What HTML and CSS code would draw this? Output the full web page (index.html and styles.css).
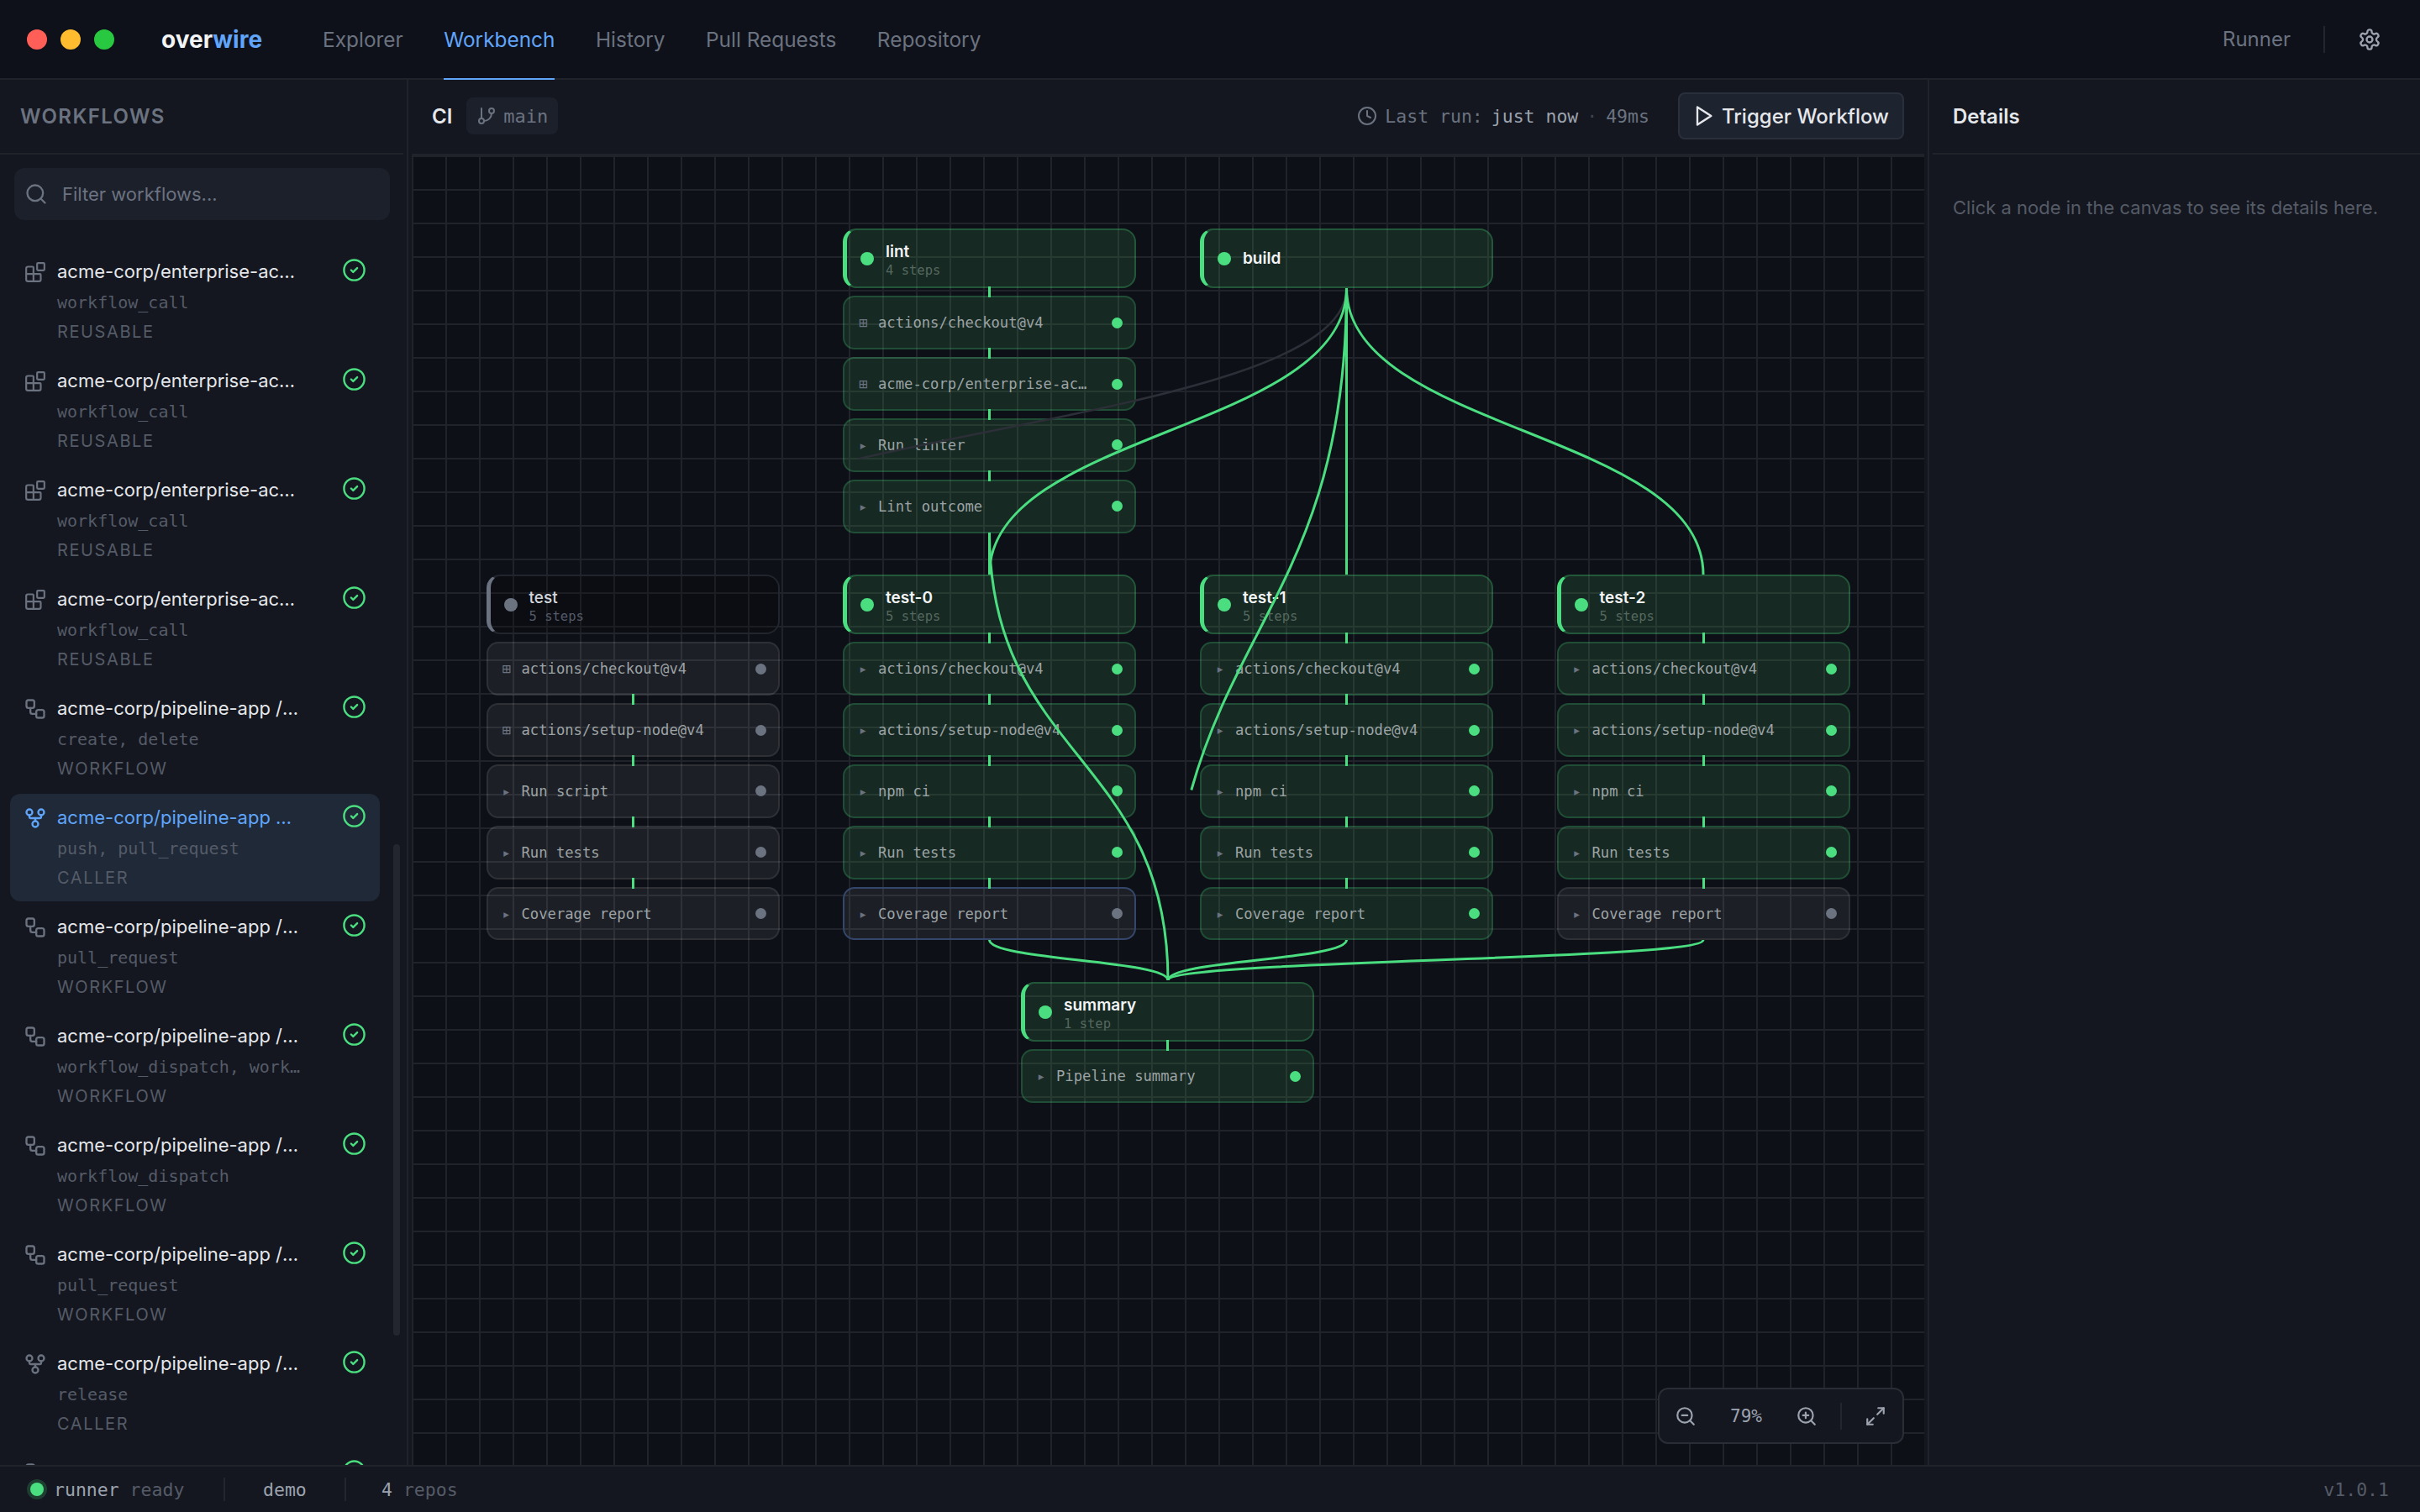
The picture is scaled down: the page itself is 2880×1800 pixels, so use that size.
FILE: index.html
```html
<!DOCTYPE html>
<html lang="en">
  <head>
    <meta charset="UTF-8" />
    <title>overwire</title>
    <link rel="stylesheet" href="styles.css">
  </head>

  <body>
    <svg class="defs" width="0" height="0">
      <symbol id="i-blocks" viewBox="0 0 24 24"><path d="M10 22V7a1 1 0 0 0-1-1H4a2 2 0 0 0-2 2v12a2 2 0 0 0 2 2h12a2 2 0 0 0 2-2v-5a1 1 0 0 0-1-1H2"/><rect x="14" y="2" width="8" height="8" rx="1"/></symbol>
      <symbol id="i-workflow" viewBox="0 0 24 24"><rect width="8" height="8" x="3" y="3" rx="2"/><path d="M7 11v4a2 2 0 0 0 2 2h4"/><rect width="8" height="8" x="13" y="13" rx="2"/></symbol>
      <symbol id="i-fork" viewBox="0 0 24 24"><circle cx="12" cy="18" r="3"/><circle cx="6" cy="6" r="3"/><circle cx="18" cy="6" r="3"/><path d="M18 9v2c0 .6-.4 1-1 1H7c-.6 0-1-.4-1-1V9"/><path d="M12 12v3"/></symbol>
      <symbol id="i-check" viewBox="0 0 24 24"><circle cx="12" cy="12" r="10"/><path d="m9 12 2 2 4-4"/></symbol>
    </svg>

    <header class="topbar">
      <div class="lights"><i class="red"></i><i class="amber"></i><i class="green"></i></div>
      <div class="logo">over<span>wire</span></div>
      <nav class="nav">
        <a>Explorer</a>
        <a class="active">Workbench</a>
        <a>History</a>
        <a>Pull Requests</a>
        <a>Repository</a>
      </nav>
      <div class="topbar-right">
        <span class="runner">Runner</span>
        <span class="vsep"></span>
        <svg class="ico gear" viewBox="0 0 24 24"><path d="M12.22 2h-.44a2 2 0 0 0-2 2v.18a2 2 0 0 1-1 1.73l-.43.25a2 2 0 0 1-2 0l-.15-.08a2 2 0 0 0-2.73.73l-.22.38a2 2 0 0 0 .73 2.73l.15.1a2 2 0 0 1 1 1.72v.51a2 2 0 0 1-1 1.74l-.15.09a2 2 0 0 0-.73 2.73l.22.38a2 2 0 0 0 2.73.73l.15-.08a2 2 0 0 1 2 0l.43.25a2 2 0 0 1 1 1.73V20a2 2 0 0 0 2 2h.44a2 2 0 0 0 2-2v-.18a2 2 0 0 1 1-1.73l.43-.25a2 2 0 0 1 2 0l.15.08a2 2 0 0 0 2.73-.73l.22-.39a2 2 0 0 0-.73-2.73l-.15-.08a2 2 0 0 1-1-1.74v-.5a2 2 0 0 1 1-1.74l.15-.09a2 2 0 0 0 .73-2.73l-.22-.38a2 2 0 0 0-2.73-.73l-.15.08a2 2 0 0 1-2 0l-.43-.25a2 2 0 0 1-1-1.73V4a2 2 0 0 0-2-2z"/><circle cx="12" cy="12" r="3"/></svg>
      </div>
    </header>

    <main class="workspace">
      <aside class="sidebar">
        <div class="side-head">WORKFLOWS</div>
        <div class="filter">
          <svg class="ico" viewBox="0 0 24 24"><circle cx="11" cy="11" r="8"/><path d="m21 21-4.3-4.3"/></svg>
          <input type="text" placeholder="Filter workflows..." />
        </div>
        <div class="wf-list">
          <div class="wf"><svg class="wf-ico blocks"><use href="#i-blocks"/></svg><div class="wf-text"><div class="wf-name">acme-corp/enterprise-actions / ci</div><div class="wf-on">workflow_call</div><div class="wf-type">REUSABLE</div></div><svg class="wf-ok"><use href="#i-check"/></svg></div>
          <div class="wf"><svg class="wf-ico blocks"><use href="#i-blocks"/></svg><div class="wf-text"><div class="wf-name">acme-corp/enterprise-actions / ci</div><div class="wf-on">workflow_call</div><div class="wf-type">REUSABLE</div></div><svg class="wf-ok"><use href="#i-check"/></svg></div>
          <div class="wf"><svg class="wf-ico blocks"><use href="#i-blocks"/></svg><div class="wf-text"><div class="wf-name">acme-corp/enterprise-actions / ci</div><div class="wf-on">workflow_call</div><div class="wf-type">REUSABLE</div></div><svg class="wf-ok"><use href="#i-check"/></svg></div>
          <div class="wf"><svg class="wf-ico blocks"><use href="#i-blocks"/></svg><div class="wf-text"><div class="wf-name">acme-corp/enterprise-actions / ci</div><div class="wf-on">workflow_call</div><div class="wf-type">REUSABLE</div></div><svg class="wf-ok"><use href="#i-check"/></svg></div>
          <div class="wf"><svg class="wf-ico"><use href="#i-workflow"/></svg><div class="wf-text"><div class="wf-name">acme-corp/pipeline-app / branches</div><div class="wf-on">create, delete</div><div class="wf-type">WORKFLOW</div></div><svg class="wf-ok"><use href="#i-check"/></svg></div>
          <div class="wf selected"><svg class="wf-ico"><use href="#i-fork"/></svg><div class="wf-text"><div class="wf-name">acme-corp/pipeline-app CI pipeline</div><div class="wf-on">push, pull_request</div><div class="wf-type">CALLER</div></div><svg class="wf-ok"><use href="#i-check"/></svg></div>
          <div class="wf"><svg class="wf-ico"><use href="#i-workflow"/></svg><div class="wf-text"><div class="wf-name">acme-corp/pipeline-app / labeler</div><div class="wf-on">pull_request</div><div class="wf-type">WORKFLOW</div></div><svg class="wf-ok"><use href="#i-check"/></svg></div>
          <div class="wf"><svg class="wf-ico"><use href="#i-workflow"/></svg><div class="wf-text"><div class="wf-name">acme-corp/pipeline-app / deploy</div><div class="wf-on">workflow_dispatch, work…</div><div class="wf-type">WORKFLOW</div></div><svg class="wf-ok"><use href="#i-check"/></svg></div>
          <div class="wf"><svg class="wf-ico"><use href="#i-workflow"/></svg><div class="wf-text"><div class="wf-name">acme-corp/pipeline-app / nightly</div><div class="wf-on">workflow_dispatch</div><div class="wf-type">WORKFLOW</div></div><svg class="wf-ok"><use href="#i-check"/></svg></div>
          <div class="wf"><svg class="wf-ico"><use href="#i-workflow"/></svg><div class="wf-text"><div class="wf-name">acme-corp/pipeline-app / preview</div><div class="wf-on">pull_request</div><div class="wf-type">WORKFLOW</div></div><svg class="wf-ok"><use href="#i-check"/></svg></div>
          <div class="wf"><svg class="wf-ico"><use href="#i-fork"/></svg><div class="wf-text"><div class="wf-name">acme-corp/pipeline-app / release</div><div class="wf-on">release</div><div class="wf-type">CALLER</div></div><svg class="wf-ok"><use href="#i-check"/></svg></div>
          <div class="wf"><svg class="wf-ico"><use href="#i-workflow"/></svg><div class="wf-text"><div class="wf-name">acme-corp/pipeline-app / stale</div><div class="wf-on">schedule</div><div class="wf-type">WORKFLOW</div></div><svg class="wf-ok"><use href="#i-check"/></svg></div>
        </div>
        <div class="scroll-thumb"></div>
      </aside>

      <div class="gutter"></div>

      <section class="center">
        <div class="center-head">
          <span class="wf-title">CI</span>
          <span class="branch">
            <svg class="ico" viewBox="0 0 24 24"><path d="M6 3v12"/><circle cx="18" cy="6" r="3"/><circle cx="6" cy="18" r="3"/><path d="M18 9a9 9 0 0 1-9 9"/></svg>
            main
          </span>
          <div class="last-run">
            <svg class="ico" viewBox="0 0 24 24"><circle cx="12" cy="12" r="10"/><path d="M12 6v6l4 2"/></svg>
            <span>Last run: <b>just now</b> <em>·</em> 49ms</span>
          </div>
          <button class="trigger">
            <svg class="ico" viewBox="0 0 24 24"><path d="M6 3l14 9-14 9z"/></svg>
            Trigger Workflow
          </button>
        </div>

        <div class="canvas">
          <div class="job-group col-0 row-1 idle">
            <div class="job"><i class="dot"></i><div><div class="job-name">test</div><div class="job-sub">5 steps</div></div></div>
            <div class="step first"><span class="kind">⊞</span><span class="label">actions/checkout@v4</span><i class="dot"></i></div>
            <div class="step"><span class="kind">⊞</span><span class="label">actions/setup-node@v4</span><i class="dot"></i></div>
            <div class="step"><span class="kind">▸</span><span class="label">Run script</span><i class="dot"></i></div>
            <div class="step"><span class="kind">▸</span><span class="label">Run tests</span><i class="dot"></i></div>
            <div class="step"><span class="kind">▸</span><span class="label">Coverage report</span><i class="dot"></i></div>
          </div>

          <div class="job-group col-1 row-0 ok">
            <div class="job"><i class="dot"></i><div><div class="job-name">lint</div><div class="job-sub">4 steps</div></div></div>
            <div class="step"><span class="kind">⊞</span><span class="label">actions/checkout@v4</span><i class="dot"></i></div>
            <div class="step"><span class="kind">⊞</span><span class="label">acme-corp/enterprise-actions/lint</span><i class="dot"></i></div>
            <div class="step"><span class="kind">▸</span><span class="label">Run linter</span><i class="dot"></i></div>
            <div class="step"><span class="kind">▸</span><span class="label">Lint outcome</span><i class="dot"></i></div>
          </div>

          <div class="job-group col-2 row-0 ok">
            <div class="job"><i class="dot"></i><div><div class="job-name solo">build</div></div></div>
          </div>

          <div class="job-group col-1 row-1 ok">
            <div class="job"><i class="dot"></i><div><div class="job-name">test-0</div><div class="job-sub">5 steps</div></div></div>
            <div class="step"><span class="kind">▸</span><span class="label">actions/checkout@v4</span><i class="dot"></i></div>
            <div class="step"><span class="kind">▸</span><span class="label">actions/setup-node@v4</span><i class="dot"></i></div>
            <div class="step"><span class="kind">▸</span><span class="label">npm ci</span><i class="dot"></i></div>
            <div class="step"><span class="kind">▸</span><span class="label">Run tests</span><i class="dot"></i></div>
            <div class="step skipped focus"><span class="kind">▸</span><span class="label">Coverage report</span><i class="dot"></i></div>
          </div>

          <div class="job-group col-2 row-1 ok">
            <div class="job"><i class="dot"></i><div><div class="job-name">test-1</div><div class="job-sub">5 steps</div></div></div>
            <div class="step"><span class="kind">▸</span><span class="label">actions/checkout@v4</span><i class="dot"></i></div>
            <div class="step"><span class="kind">▸</span><span class="label">actions/setup-node@v4</span><i class="dot"></i></div>
            <div class="step"><span class="kind">▸</span><span class="label">npm ci</span><i class="dot"></i></div>
            <div class="step"><span class="kind">▸</span><span class="label">Run tests</span><i class="dot"></i></div>
            <div class="step"><span class="kind">▸</span><span class="label">Coverage report</span><i class="dot"></i></div>
          </div>

          <div class="job-group col-3 row-1 ok">
            <div class="job"><i class="dot"></i><div><div class="job-name">test-2</div><div class="job-sub">5 steps</div></div></div>
            <div class="step"><span class="kind">▸</span><span class="label">actions/checkout@v4</span><i class="dot"></i></div>
            <div class="step"><span class="kind">▸</span><span class="label">actions/setup-node@v4</span><i class="dot"></i></div>
            <div class="step"><span class="kind">▸</span><span class="label">npm ci</span><i class="dot"></i></div>
            <div class="step"><span class="kind">▸</span><span class="label">Run tests</span><i class="dot"></i></div>
            <div class="step skipped"><span class="kind">▸</span><span class="label">Coverage report</span><i class="dot"></i></div>
          </div>

          <div class="job-group col-sum row-2 ok">
            <div class="job"><i class="dot"></i><div><div class="job-name">summary</div><div class="job-sub">1 step</div></div></div>
            <div class="step"><span class="kind">▸</span><span class="label">Pipeline summary</span><i class="dot"></i></div>
          </div>

          <!-- edges, in canvas coordinates -->
          <svg class="edges" viewBox="0 0 1800 1559">
            <path class="edge-dim" d="M1112.5 158C1112.5 264.6 780.7 304.5 531.8 361.1"/>
            <path d="M1112.5 158C1112.5 328.5 687.5 328.5 687.5 499"/>
            <path d="M1112.5 158V499"/>
            <path d="M1112.5 158C1112.5 328.5 1537 328.5 1537 499"/>
            <path d="M1112.5 158C1112.5 476.5 985.5 548.8 927.8 755.5"/>
            <path d="M687.5 449V499"/>
            <path d="M687.5 449C687.5 715.5 900 715.5 900 982"/>
            <path d="M687.5 934C687.5 958 900 958 900 982"/>
            <path d="M1112.5 934C1112.5 958 900 958 900 982"/>
            <path d="M1537 934C1537 958 900 958 900 982"/>
          </svg>

          <div class="zoombar">
            <svg class="ico" viewBox="0 0 24 24"><circle cx="11" cy="11" r="8"/><path d="m21 21-4.3-4.3"/><path d="M8 11h6"/></svg>
            <span class="pct">79%</span>
            <svg class="ico" viewBox="0 0 24 24"><circle cx="11" cy="11" r="8"/><path d="m21 21-4.3-4.3"/><path d="M11 8v6"/><path d="M8 11h6"/></svg>
            <span class="vsep"></span>
            <svg class="ico" viewBox="0 0 24 24"><path d="M15 3h6v6"/><path d="M9 21H3v-6"/><path d="M21 3l-7 7"/><path d="M3 21l7-7"/></svg>
          </div>
        </div>
      </section>

      <div class="gutter"></div>

      <aside class="details">
        <div class="details-head">Details</div>
        <p class="details-empty">Click a node in the canvas to see its details here.</p>
      </aside>
    </main>

    <footer class="statusbar">
      <i class="status-dot"></i>
      <span class="st-a">runner <em>ready</em></span>
      <span class="vsep"></span>
      <span class="st-b">demo</span>
      <span class="vsep"></span>
      <span class="st-c">4 <em>repos</em></span>
      <span class="version">v1.0.1</span>
    </footer>
  </body>
</html>
```

FILE: styles.css
```css
html,
body {
  height: 100%;
  margin: 0;
  padding: 0;
}

body {
  display: flex;
  flex-flow: column;
  background: #0d1017;
  color: #e5e7eb;
  font-family: Inter, "Liberation Sans", sans-serif;
  overflow: hidden;
}

.defs {
  position: absolute;
}

.ico {
  fill: none;
  stroke: currentColor;
  stroke-width: 2;
  stroke-linecap: round;
  stroke-linejoin: round;
  flex: none;
}

.vsep {
  display: block;
  width: 2px;
  background: #23262e;
}

/* top bar */
.topbar {
  height: 95px;
  box-sizing: border-box;
  flex: none;
  display: flex;
  align-items: center;
  background: #0e1119;
  border-bottom: 2px solid #20232a;
  padding-left: 32px;
  padding-right: 46px;
}

.lights {
  display: flex;
  gap: 16px;
}

.lights i {
  width: 24px;
  height: 24px;
  border-radius: 50%;
}

.lights .red { background: #ff5f57; }
.lights .amber { background: #febc2e; }
.lights .green { background: #28c840; }

.logo {
  margin-left: 56px;
  font-size: 28px;
  font-weight: 700;
  color: #f3f4f6;
}

.logo span {
  color: #60a5fa;
}

.nav {
  display: flex;
  gap: 48.5px;
  margin-left: 72px;
  height: 93px;
}

.nav a {
  display: flex;
  align-items: center;
  box-sizing: border-box;
  height: 97px;
  font-size: 24.4px;
  color: #6b7280;
  border-bottom: 4px solid transparent;
}

.nav a.active {
  color: #60a5fa;
  border-bottom-color: #60a5fa;
}

.topbar-right {
  margin-left: auto;
  display: flex;
  align-items: center;
}

.runner {
  font-size: 24px;
  color: #6b7280;
}

.topbar-right .vsep {
  height: 32px;
  margin: 0 39px 0 39px;
}

.gear {
  width: 28px;
  height: 28px;
  color: #9ca3af;
}

/* three columns */
.workspace {
  flex: 1;
  display: flex;
  min-height: 0;
  background: #14171f;
}

.gutter {
  flex: none;
  width: 10px;
  display: flex;
  justify-content: center;
}

.gutter::before {
  content: "";
  width: 2px;
  background: #20232a;
}

.sidebar {
  position: relative;
  flex: none;
  width: 480px;
  display: flex;
  flex-flow: column;
  overflow: hidden;
}

.side-head {
  height: 89px;
  box-sizing: border-box;
  flex: none;
  display: flex;
  align-items: center;
  padding-left: 24px;
  border-bottom: 2px solid #20232a;
  font-size: 24px;
  font-weight: 600;
  letter-spacing: 1.4px;
  color: #6b7280;
}

.filter {
  flex: none;
  margin: 16px 16px 0 17px;
  height: 62px;
  display: flex;
  align-items: center;
  gap: 17px;
  padding-left: 12px;
  background: #1c202b;
  border-radius: 12px;
  color: #6b7280;
}

.filter svg {
  width: 28px;
  height: 28px;
}

.filter input {
  flex: 1;
  min-width: 0;
  border: none;
  background: none;
  outline: none;
  padding: 0;
  font: 22px Inter, sans-serif;
  color: #e5e7eb;
}

.filter input::placeholder {
  color: #6b7280;
}

.wf-list {
  flex: 1;
  min-height: 0;
  overflow: hidden;
  padding-top: 33px;
}

.wf {
  height: 128px;
  margin: 0 28px 2px 12px;
  padding: 12px 0 0 16px;
  box-sizing: border-box;
  display: flex;
  border-radius: 12px;
}

.wf.selected {
  background: #1f2937;
}

.wf-ico {
  flex: none;
  width: 28px;
  height: 28px;
  margin-top: 3px;
  fill: none;
  stroke: #6b7280;
  stroke-width: 2;
  stroke-linecap: round;
  stroke-linejoin: round;
}

.wf-ico.blocks {
  width: 26px;
  height: 26px;
  margin: 4px 1px 0 1px;
}

.selected .wf-ico {
  stroke: #60a5fa;
}

.wf-text {
  flex: none;
  width: 288px;
  margin-left: 12px;
}

.wf-name {
  padding-top: 1px;
  font-size: 22px;
  line-height: 30px;
  color: #e5e7eb;
  white-space: nowrap;
  overflow: hidden;
  text-overflow: ellipsis;
}

.selected .wf-name {
  color: #60a5fa;
}

.wf-on {
  margin-top: 7px;
  font: 20px/30px "DejaVu Sans Mono", monospace;
  color: #555b67;
  white-space: nowrap;
}

.wf-type {
  margin-top: 5px;
  font-size: 20px;
  line-height: 30px;
  letter-spacing: 1.6px;
  color: #555b67;
}

.wf-ok {
  flex: none;
  width: 29px;
  height: 29px;
  margin-left: 51px;
  fill: none;
  stroke: #4ade80;
  stroke-width: 2;
  stroke-linecap: round;
  stroke-linejoin: round;
}

.scroll-thumb {
  position: absolute;
  left: 468px;
  top: 910px;
  width: 8px;
  height: 585px;
  border-radius: 4px;
  background: #23262e;
}

/* canvas column */
.center {
  flex: 1;
  min-width: 0;
  display: flex;
  flex-flow: column;
}

.center-head {
  height: 90px;
  box-sizing: border-box;
  flex: none;
  display: flex;
  align-items: center;
  padding: 0 24px 2px 24px;
  border-bottom: 2px solid #20232a;
}

.wf-title {
  font-size: 24px;
  font-weight: 600;
}

.branch {
  display: flex;
  align-items: center;
  gap: 8px;
  height: 44px;
  margin-left: 17px;
  padding: 0 12px 0 12px;
  border-radius: 8px;
  background: #1c202b;
  font: 22px "DejaVu Sans Mono", monospace;
  color: #6b7280;
}

.branch svg {
  width: 24px;
  height: 24px;
}

.last-run {
  margin-left: auto;
  display: flex;
  align-items: center;
  gap: 9px;
  font: 21.5px "DejaVu Sans Mono", monospace;
  color: #6b7280;
}

.last-run svg {
  width: 24px;
  height: 24px;
}

.last-run b {
  margin-left: -3px;
  font-weight: 400;
  color: #9ca3af;
}

.last-run em {
  margin: 0 -3px;
  font-style: normal;
  color: #3f4450;
}

.trigger {
  display: flex;
  align-items: center;
  gap: 8px;
  height: 56px;
  margin-left: 34px;
  padding: 0 16px 0 14px;
  box-sizing: border-box;
  border: 2px solid #2a2f3c;
  border-radius: 8px;
  background: #1e2330;
  font: 500 24px Inter, sans-serif;
  color: #e5e7eb;
}

.trigger svg {
  width: 28px;
  height: 28px;
}

.canvas {
  position: relative;
  flex: 1;
  min-height: 0;
  overflow: hidden;
  background-color: #0d1017;
  background-image:
    linear-gradient(#20232a 2px, transparent 2px),
    linear-gradient(90deg, #20232a 2px, transparent 2px);
  background-size: 40px 40px;
}

.edges {
  position: absolute;
  left: 0;
  top: 0;
  width: 1800px;
  height: 1559px;
  fill: none;
  stroke: #4ade80;
  stroke-width: 3;
}

.edges .edge-dim {
  stroke: #2c2f37;
  stroke-width: 2.5;
}

/* graph nodes, placed on the free canvas */
.job-group {
  position: absolute;
  width: 349px;
  display: flex;
  flex-flow: column;
  gap: 9.4px;
}

.col-0 { left: 88.5px; }
.col-1 { left: 513px; }
.col-2 { left: 938px; }
.col-3 { left: 1362.5px; }
.col-sum { left: 725px; }
.row-0 { top: 87px; }
.row-1 { top: 499px; }
.row-2 { top: 984px; }

.dot {
  flex: none;
  border-radius: 50%;
  background: #4ade80;
}

.job {
  height: 71px;
  box-sizing: border-box;
  display: flex;
  align-items: center;
  gap: 14px;
  padding-left: 16px;
  background: rgba(85, 215, 110, 0.13);
  border: 2px solid rgba(74, 222, 128, 0.25);
  border-left: 5px solid #4ade80;
  border-radius: 16px;
}

.job .dot {
  width: 16px;
  height: 16px;
}

.job-name {
  font-size: 19px;
  line-height: 24px;
  font-weight: 600;
  color: #f3f4f6;
  padding-top: 4px;
}

.job-name.solo {
  padding-top: 0;
}

.job-sub {
  font: 15.5px/20px "DejaVu Sans Mono", monospace;
  color: #55685f;
}

.step {
  position: relative;
  height: 63.5px;
  box-sizing: border-box;
  display: flex;
  align-items: center;
  padding: 0 14px 0 17px;
  background: rgba(85, 215, 110, 0.13);
  border: 2px solid rgba(74, 222, 128, 0.2);
  border-radius: 14px;
}

.step::before {
  content: "";
  position: absolute;
  left: 171px;
  top: -13px;
  width: 3px;
  height: 13px;
  background: #4ade80;
}

.step .dot {
  width: 13px;
  height: 13px;
  margin-left: auto;
}

.kind {
  flex: none;
  width: 23px;
  font: 17px "DejaVu Sans Mono", monospace;
  color: #6b7280;
}

.label {
  width: 252px;
  font: 17.2px "DejaVu Sans Mono", monospace;
  color: #9ca3a5;
  white-space: nowrap;
  overflow: hidden;
  text-overflow: ellipsis;
}

.idle .job {
  background: rgba(0, 0, 0, 0.15);
  border-color: #22252d;
  border-left-color: #6b7280;
}

.idle .job .job-name {
  font-weight: 500;
  color: #d1d5db;
}

.idle .job .job-sub {
  color: #555b67;
}

.idle .dot,
.skipped .dot {
  background: #6b7280;
}

.idle .step,
.skipped.step {
  background: rgba(255, 255, 255, 0.065);
  border-color: rgba(255, 255, 255, 0.08);
}

.skipped.focus {
  border-color: #34466a;
}

.idle .step.first::before {
  display: none;
}

/* zoom control */
.zoombar {
  position: absolute;
  left: 1483px;
  top: 1467px;
  width: 293px;
  height: 67px;
  box-sizing: border-box;
  display: flex;
  align-items: center;
  padding-left: 18px;
  background: #14171f;
  border: 2px solid #2a2d35;
  border-radius: 12px;
  color: #9ca3af;
}

.zoombar svg {
  width: 26px;
  height: 26px;
}

.pct {
  width: 118px;
  text-align: center;
  font: 21px "DejaVu Sans Mono", monospace;
}

.zoombar .vsep {
  height: 32px;
  margin: 0 27px;
}

/* details */
.details {
  flex: none;
  width: 580px;
}

.details-head {
  height: 89px;
  box-sizing: border-box;
  display: flex;
  align-items: center;
  padding-left: 24px;
  border-bottom: 2px solid #20232a;
  font-size: 24px;
  font-weight: 600;
}

.details-empty {
  margin: 48px 0 0 24px;
  font-size: 22px;
  line-height: 30px;
  color: #555b67;
}

/* status bar */
.statusbar {
  height: 56px;
  box-sizing: border-box;
  flex: none;
  display: flex;
  align-items: center;
  padding: 0 37px 0 36px;
  background: #14171f;
  border-top: 2px solid #20232a;
  font: 21.5px "DejaVu Sans Mono", monospace;
  color: #9ca3af;
}

.statusbar em {
  font-style: normal;
  color: #555b67;
}

.status-dot {
  width: 16px;
  height: 16px;
  border-radius: 50%;
  background: #4ade80;
  box-shadow: 0 0 0 4px rgba(74, 222, 128, 0.2);
  margin-right: 12px;
}

.statusbar .vsep {
  height: 28px;
}

.st-a {
  width: 202px;
}

.st-b {
  margin-left: 45px;
  width: 97px;
}

.st-c {
  margin-left: 42px;
}

.version {
  margin-left: auto;
  color: #555b67;
}
```
